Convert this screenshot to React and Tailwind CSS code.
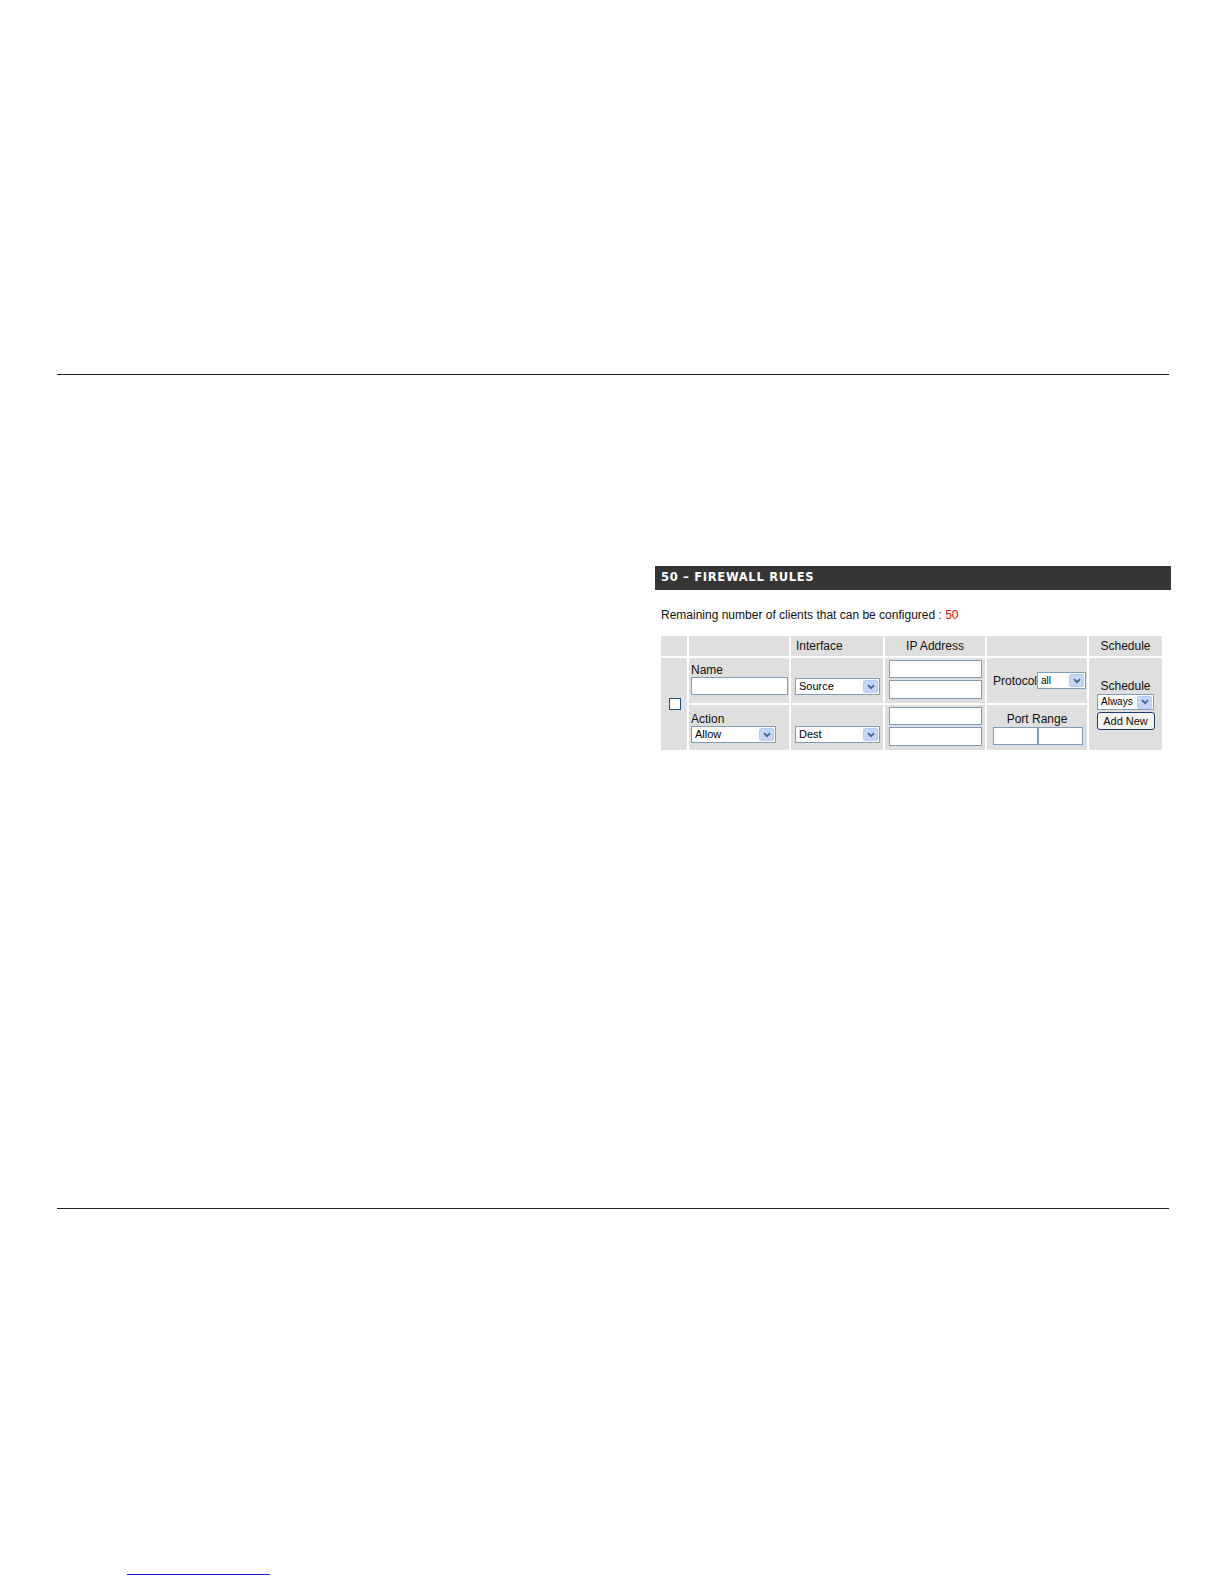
import React from "react";

const font = { fontFamily: '"Liberation Sans", Arial, sans-serif' };

function Arrow() {
  return (
    <span className="flex h-[13px] w-[15px] items-center justify-center rounded-[2px] border border-[#b9c9ef] bg-[#c6d6fb]">
      <svg width="8" height="6" viewBox="0 0 8 6">
        <path d="M1 1.2 L4 4.2 L7 1.2" fill="none" stroke="#4d6185" strokeWidth="1.8" />
      </svg>
    </span>
  );
}

function Select({ label, w, h = "h-[17px]", small }) {
  return (
    <div className={`flex ${h} ${w} items-center justify-between border border-[#7f9db9] bg-white pl-[3px] pr-[1px]`}>
      <span className={`${small ? "text-[10px]" : "text-[11px]"} leading-none text-black`}>{label}</span>
      <Arrow />
    </div>
  );
}

function Input({ w, h = "h-[18px]" }) {
  return <div className={`${w} ${h} border border-[#7f9db9] bg-white`} />;
}

export default function App() {
  return (
    <div className="relative h-[1584px] w-[1224px] bg-white" style={font}>
      <div className="h-[374px]" />
      <div className="ml-[57px] h-px w-[1112px] bg-[#231f20]" />
      <div className="h-[191px]" />
      {/* header bar */}
      <div className="ml-[655px] flex h-[24px] w-[516px] items-center bg-[#353535] pl-[6px]">
        <span
          className="text-[11.5px] font-bold tracking-[0.7px] text-white"
          style={{ fontFamily: '"DejaVu Sans", Verdana, sans-serif' }}
        >
          50 – FIREWALL RULES
        </span>
      </div>
      <div className="ml-[661px] mt-[18px] text-[12px] leading-[14px] text-[#111]">
        Remaining number of clients that can be configured : <span className="text-[#e0101a]">50</span>
      </div>
      <div className="h-[12px]" />
      <table
        className="ml-[659px] table-fixed border-separate border-spacing-[2px] text-[12px] text-[#111]"
        style={{ width: 505 }}
      >
        <colgroup>
          <col style={{ width: 26 }} />
          <col style={{ width: 100 }} />
          <col style={{ width: 92 }} />
          <col style={{ width: 100 }} />
          <col style={{ width: 100 }} />
          <col style={{ width: 73 }} />
        </colgroup>
        <tbody>
          <tr className="h-[20px]">
            <td className="bg-[#dfdfdf] p-0" />
            <td className="bg-[#dfdfdf] p-0" />
            <td className="bg-[#dfdfdf] p-0 pl-[5px] leading-[14px]">Interface</td>
            <td className="bg-[#dfdfdf] p-0 text-center leading-[14px]">IP Address</td>
            <td className="bg-[#dfdfdf] p-0" />
            <td className="bg-[#dfdfdf] p-0 text-center leading-[14px]">Schedule</td>
          </tr>
          <tr className="h-[45px]">
            <td rowSpan={2} className="bg-[#dfdfdf] p-0 align-middle">
              <div className="ml-[8px] h-[12px] w-[12px] border border-[#1c5180] bg-white" />
            </td>
            <td className="bg-[#dfdfdf] p-0 pl-[2px] align-top">
              <div className="mt-[5px] leading-[14px]">Name</div>
              <Input w="w-[97px]" />
            </td>
            <td className="bg-[#dfdfdf] p-0 pl-[4px] align-top">
              <div className="mt-[20px]">
                <Select label="Source" w="w-[85px]" />
              </div>
            </td>
            <td className="bg-[#dfdfdf] p-0 pl-[4px] align-top">
              <div className="mt-[2px] flex flex-col gap-[2px]">
                <Input w="w-[93px]" />
                <Input w="w-[93px]" h="h-[19px]" />
              </div>
            </td>
            <td className="bg-[#dfdfdf] p-0 pl-[6px] align-middle">
              <div className="flex items-center">
                <span className="leading-[14px]">Protocol</span>
                <Select label="all" w="w-[49px]" small />
              </div>
            </td>
            <td rowSpan={2} className="bg-[#dfdfdf] p-0 align-middle">
              <div className="flex flex-col items-center">
                <div className="mt-[1px] leading-[14px]">Schedule</div>
                <div className="mt-[1px]">
                  <Select label="Always" w="w-[57px]" h="h-[16px]" small />
                </div>
                <div className="mt-[2px] flex h-[18px] w-[58px] items-center justify-center rounded-[3px] border border-[#1c3b6b] bg-[#f4f4f0] text-[11px] leading-none">
                  Add New
                </div>
              </div>
            </td>
          </tr>
          <tr className="h-[45px]">
            <td className="bg-[#dfdfdf] p-0 pl-[2px] align-top">
              <div className="mt-[7px] leading-[14px]">Action</div>
              <Select label="Allow" w="w-[85px]" />
            </td>
            <td className="bg-[#dfdfdf] p-0 pl-[4px] align-top">
              <div className="mt-[21px]">
                <Select label="Dest" w="w-[85px]" />
              </div>
            </td>
            <td className="bg-[#dfdfdf] p-0 pl-[4px] align-top">
              <div className="mt-[2px] flex flex-col gap-[2px]">
                <Input w="w-[93px]" />
                <Input w="w-[93px]" h="h-[19px]" />
              </div>
            </td>
            <td className="bg-[#dfdfdf] p-0 align-top">
              <div className="mt-[7px] text-center leading-[14px]">Port Range</div>
              <div className="ml-[6px] mt-[1px] flex">
                <Input w="w-[45px]" />
                <Input w="w-[45px]" />
              </div>
            </td>
          </tr>
        </tbody>
      </table>
      <div className="h-[456px]" />
      <div className="ml-[57px] h-px w-[1112px] bg-[#231f20]" />
      <div className="h-[365px]" />
      <div className="ml-[127px] h-px w-[143px] bg-[#1f1fc8]" />
    </div>
  );
}
